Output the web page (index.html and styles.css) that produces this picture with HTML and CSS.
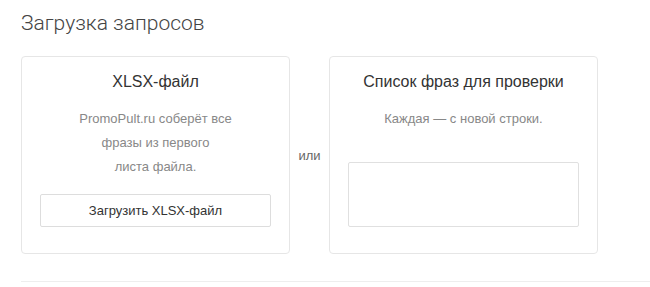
FILE: index.html
```html
<!DOCTYPE html>
<html lang="ru">

<head>
    <meta charset="UTF-8">
    <meta name="viewport" content="width=device-width, initial-scale=1.0">
    <title>Загрузка запросов</title>
    <link rel="stylesheet" href="styles.css">
</head>

<body>
    <div class="page">
        <h2 class="page-title">Загрузка запросов</h2>

        <div class="upload-row">
            <div class="upload-card">
                <h3>XLSX-файл</h3>
                <p class="hint">PromoPult.ru соберёт все<br>фразы из первого<br>листа файла.</p>
                <button class="upload-btn">Загрузить XLSX-файл</button>
            </div>

            <div class="or">или</div>

            <div class="upload-card">
                <h3>Список фраз для проверки</h3>
                <p class="hint">Каждая — с новой строки.</p>
                <textarea class="phrases"></textarea>
            </div>
        </div>

        <div class="divider"></div>
    </div>
</body>

</html>
```

FILE: styles.css
```css
html,
body {
    overflow: hidden;
}

body {
    font-family: "Liberation Sans", Arial, sans-serif;
    background: white;
    margin: 0;
    color: #333;
}

.page {
    padding: 11px 0 0 21px;
}

.page-title {
    font-family: Roboto, "Liberation Sans", sans-serif;
    font-weight: 300;
    font-size: 21px;
    line-height: 24px;
    color: #444;
    margin: 0 0 21px;
}

.upload-row {
    display: flex;
    align-items: stretch;
}

.upload-card {
    width: 269px;
    box-sizing: border-box;
    border: 1px solid #e6e6e6;
    border-radius: 4px;
    padding: 15px 18px 26px;
    text-align: center;
}

.upload-card h3 {
    font-size: 16px;
    font-weight: normal;
    line-height: 20px;
    color: #333;
    margin: 0 0 15px;
}

.hint {
    font-size: 13px;
    line-height: 24px;
    color: #888;
    margin: 0;
}

.upload-btn {
    display: block;
    width: 100%;
    height: 33px;
    margin-top: 15px;
    background: white;
    border: 1px solid #ddd;
    border-radius: 2px;
    font-family: inherit;
    font-size: 13px;
    color: #333;
    cursor: pointer;
}

.phrases {
    display: block;
    width: 100%;
    height: 65px;
    box-sizing: border-box;
    margin-top: 31px;
    border: 1px solid #e0e0e0;
    border-radius: 2px;
    resize: none;
}

.or {
    width: 39px;
    display: flex;
    align-items: center;
    justify-content: center;
    font-size: 13px;
    color: #666;
}

.divider {
    border-top: 1px solid #eee;
    margin-top: 27px;
}
```
